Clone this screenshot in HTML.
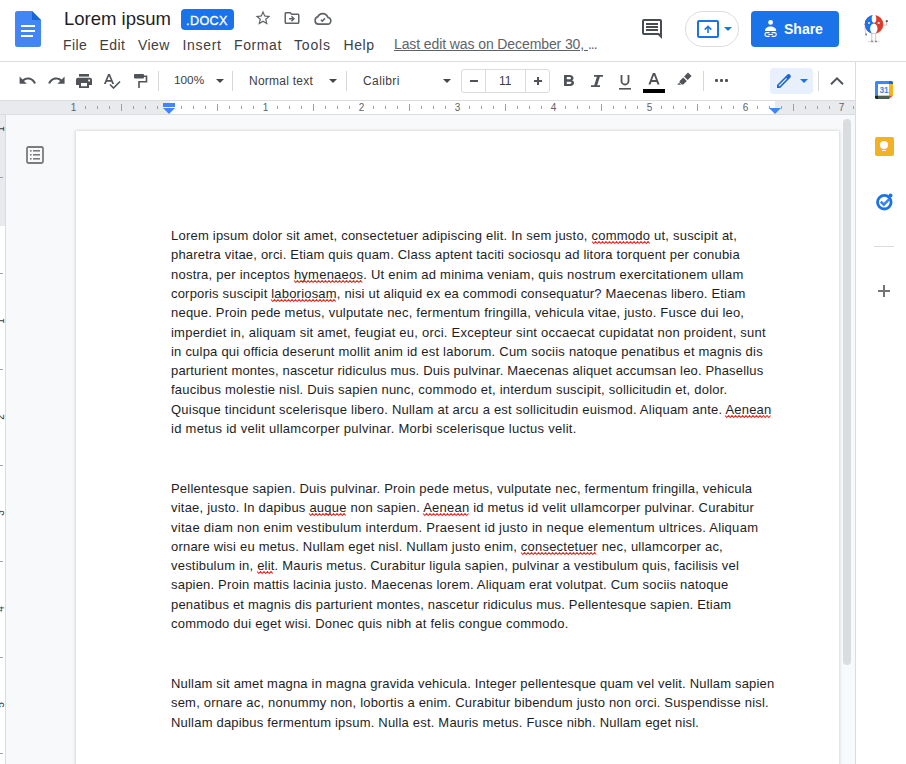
<!DOCTYPE html>
<html><head><meta charset="utf-8">
<style>
*{margin:0;padding:0;box-sizing:border-box}
html,body{width:906px;height:764px;overflow:hidden;background:#fff;font-family:"Liberation Sans",sans-serif;position:relative}
.a{position:absolute}
#hdr{left:0;top:0;width:906px;height:61px;background:#fff}
#hb{left:0;top:61px;width:906px;height:1px;background:#dadce0}
#tb{left:0;top:62px;width:855px;height:38px;background:#fff}
#ruler{left:0;top:100px;width:855px;height:15px;background:#e8eaed;border-top:1px solid #dadce0;border-bottom:1px solid #dadce0}
#canvas{left:6px;top:115px;width:849px;height:649px;background:#f8f9fa}
#vr{left:0;top:115px;width:6px;height:649px;background:#fff;border-right:1px solid #dadce0}
#page{left:76px;top:131px;width:763px;height:700px;background:#fff;box-shadow:0 0 2px 1px rgba(60,64,67,.10),0 1px 3px 1px rgba(60,64,67,.08)}
#side{left:855px;top:62px;width:51px;height:702px;background:#fff;border-left:1px solid #dadce0}
.menu{top:37px;font-size:14px;color:#3c4043;line-height:16px;letter-spacing:0.4px;white-space:nowrap}
.sep{top:71px;width:1px;height:20px;background:#d5d7da}
.tbt{top:75px;font-size:12px;color:#3c4043;line-height:12px;white-space:nowrap}
.tri{top:79px;width:8px;height:4px;fill:#474747}
.rn{top:2px;width:7px;text-align:center;font-size:10px;line-height:10px;color:#5f6368}
.sq{}
.txt{left:171px;font-family:"Liberation Sans",sans-serif;font-size:13px;color:#1e1e1e;white-space:nowrap;line-height:16px}
</style></head><body>
<div id="hdr" class="a"></div>
<div id="hb" class="a"></div>
<div id="tb" class="a"></div>
<div id="canvas" class="a"></div>
<div id="vr" class="a" style="overflow:hidden"><div class="a" style="left:0;top:0;width:5px;height:111px;background:#e8eaed"></div><div class="a" style="left:-4px;top:10.5px;width:10px;height:10px;font-size:10px;line-height:10px;text-align:center;color:#3c4043;transform:translateY(-2px) rotate(-90deg)">1</div><div class="a" style="left:0;top:62.0px;width:3px;height:1px;background:#9aa0a6"></div><div class="a" style="left:0;top:158.0px;width:3px;height:1px;background:#9aa0a6"></div><div class="a" style="left:-4px;top:202.5px;width:10px;height:10px;font-size:10px;line-height:10px;text-align:center;color:#3c4043;transform:translateY(-2px) rotate(-90deg)">1</div><div class="a" style="left:0;top:254.0px;width:3px;height:1px;background:#9aa0a6"></div><div class="a" style="left:-4px;top:298.5px;width:10px;height:10px;font-size:10px;line-height:10px;text-align:center;color:#3c4043;transform:translateY(-2px) rotate(-90deg)">2</div><div class="a" style="left:0;top:350.0px;width:3px;height:1px;background:#9aa0a6"></div><div class="a" style="left:-4px;top:394.5px;width:10px;height:10px;font-size:10px;line-height:10px;text-align:center;color:#3c4043;transform:translateY(-2px) rotate(-90deg)">3</div><div class="a" style="left:0;top:446.0px;width:3px;height:1px;background:#9aa0a6"></div><div class="a" style="left:-4px;top:490.5px;width:10px;height:10px;font-size:10px;line-height:10px;text-align:center;color:#3c4043;transform:translateY(-2px) rotate(-90deg)">4</div><div class="a" style="left:0;top:542.0px;width:3px;height:1px;background:#9aa0a6"></div><div class="a" style="left:-4px;top:586.5px;width:10px;height:10px;font-size:10px;line-height:10px;text-align:center;color:#3c4043;transform:translateY(-2px) rotate(-90deg)">5</div><div class="a" style="left:0;top:638.0px;width:3px;height:1px;background:#9aa0a6"></div><div class="a" style="left:-4px;top:682.5px;width:10px;height:10px;font-size:10px;line-height:10px;text-align:center;color:#3c4043;transform:translateY(-2px) rotate(-90deg)">6</div><div class="a" style="left:0;top:734.0px;width:3px;height:1px;background:#9aa0a6"></div></div>
<div id="ruler" class="a"><div class="a" style="left:170px;top:0;width:605px;height:13px;background:#fff"></div><div class="a rn" style="left:70.0px">1</div><div class="a" style="left:85.0px;top:5px;width:1px;height:3px;background:#9aa0a6"></div><div class="a" style="left:97.0px;top:5px;width:1px;height:3px;background:#9aa0a6"></div><div class="a" style="left:109.0px;top:5px;width:1px;height:3px;background:#9aa0a6"></div><div class="a" style="left:121.0px;top:3px;width:1px;height:7px;background:#9aa0a6"></div><div class="a" style="left:133.0px;top:5px;width:1px;height:3px;background:#9aa0a6"></div><div class="a" style="left:145.0px;top:5px;width:1px;height:3px;background:#9aa0a6"></div><div class="a" style="left:157.0px;top:5px;width:1px;height:3px;background:#9aa0a6"></div><div class="a" style="left:181.0px;top:5px;width:1px;height:3px;background:#9aa0a6"></div><div class="a" style="left:193.0px;top:5px;width:1px;height:3px;background:#9aa0a6"></div><div class="a" style="left:205.0px;top:5px;width:1px;height:3px;background:#9aa0a6"></div><div class="a" style="left:217.0px;top:3px;width:1px;height:7px;background:#9aa0a6"></div><div class="a" style="left:229.0px;top:5px;width:1px;height:3px;background:#9aa0a6"></div><div class="a" style="left:241.0px;top:5px;width:1px;height:3px;background:#9aa0a6"></div><div class="a" style="left:253.0px;top:5px;width:1px;height:3px;background:#9aa0a6"></div><div class="a rn" style="left:262.0px">1</div><div class="a" style="left:277.0px;top:5px;width:1px;height:3px;background:#9aa0a6"></div><div class="a" style="left:289.0px;top:5px;width:1px;height:3px;background:#9aa0a6"></div><div class="a" style="left:301.0px;top:5px;width:1px;height:3px;background:#9aa0a6"></div><div class="a" style="left:313.0px;top:3px;width:1px;height:7px;background:#9aa0a6"></div><div class="a" style="left:325.0px;top:5px;width:1px;height:3px;background:#9aa0a6"></div><div class="a" style="left:337.0px;top:5px;width:1px;height:3px;background:#9aa0a6"></div><div class="a" style="left:349.0px;top:5px;width:1px;height:3px;background:#9aa0a6"></div><div class="a rn" style="left:358.0px">2</div><div class="a" style="left:373.0px;top:5px;width:1px;height:3px;background:#9aa0a6"></div><div class="a" style="left:385.0px;top:5px;width:1px;height:3px;background:#9aa0a6"></div><div class="a" style="left:397.0px;top:5px;width:1px;height:3px;background:#9aa0a6"></div><div class="a" style="left:409.0px;top:3px;width:1px;height:7px;background:#9aa0a6"></div><div class="a" style="left:421.0px;top:5px;width:1px;height:3px;background:#9aa0a6"></div><div class="a" style="left:433.0px;top:5px;width:1px;height:3px;background:#9aa0a6"></div><div class="a" style="left:445.0px;top:5px;width:1px;height:3px;background:#9aa0a6"></div><div class="a rn" style="left:454.0px">3</div><div class="a" style="left:469.0px;top:5px;width:1px;height:3px;background:#9aa0a6"></div><div class="a" style="left:481.0px;top:5px;width:1px;height:3px;background:#9aa0a6"></div><div class="a" style="left:493.0px;top:5px;width:1px;height:3px;background:#9aa0a6"></div><div class="a" style="left:505.0px;top:3px;width:1px;height:7px;background:#9aa0a6"></div><div class="a" style="left:517.0px;top:5px;width:1px;height:3px;background:#9aa0a6"></div><div class="a" style="left:529.0px;top:5px;width:1px;height:3px;background:#9aa0a6"></div><div class="a" style="left:541.0px;top:5px;width:1px;height:3px;background:#9aa0a6"></div><div class="a rn" style="left:550.0px">4</div><div class="a" style="left:565.0px;top:5px;width:1px;height:3px;background:#9aa0a6"></div><div class="a" style="left:577.0px;top:5px;width:1px;height:3px;background:#9aa0a6"></div><div class="a" style="left:589.0px;top:5px;width:1px;height:3px;background:#9aa0a6"></div><div class="a" style="left:601.0px;top:3px;width:1px;height:7px;background:#9aa0a6"></div><div class="a" style="left:613.0px;top:5px;width:1px;height:3px;background:#9aa0a6"></div><div class="a" style="left:625.0px;top:5px;width:1px;height:3px;background:#9aa0a6"></div><div class="a" style="left:637.0px;top:5px;width:1px;height:3px;background:#9aa0a6"></div><div class="a rn" style="left:646.0px">5</div><div class="a" style="left:661.0px;top:5px;width:1px;height:3px;background:#9aa0a6"></div><div class="a" style="left:673.0px;top:5px;width:1px;height:3px;background:#9aa0a6"></div><div class="a" style="left:685.0px;top:5px;width:1px;height:3px;background:#9aa0a6"></div><div class="a" style="left:697.0px;top:3px;width:1px;height:7px;background:#9aa0a6"></div><div class="a" style="left:709.0px;top:5px;width:1px;height:3px;background:#9aa0a6"></div><div class="a" style="left:721.0px;top:5px;width:1px;height:3px;background:#9aa0a6"></div><div class="a" style="left:733.0px;top:5px;width:1px;height:3px;background:#9aa0a6"></div><div class="a rn" style="left:742.0px">6</div><div class="a" style="left:757.0px;top:5px;width:1px;height:3px;background:#9aa0a6"></div><div class="a" style="left:769.0px;top:5px;width:1px;height:3px;background:#9aa0a6"></div><div class="a" style="left:781.0px;top:5px;width:1px;height:3px;background:#9aa0a6"></div><div class="a" style="left:793.0px;top:3px;width:1px;height:7px;background:#9aa0a6"></div><div class="a" style="left:805.0px;top:5px;width:1px;height:3px;background:#9aa0a6"></div><div class="a" style="left:817.0px;top:5px;width:1px;height:3px;background:#9aa0a6"></div><div class="a" style="left:829.0px;top:5px;width:1px;height:3px;background:#9aa0a6"></div><div class="a rn" style="left:838.0px">7</div><div class="a" style="left:163px;top:2px;width:12px;height:4px;background:#4285f4"></div><svg class="a" style="left:163px;top:7px" width="12" height="6" viewBox="0 0 12 6"><path d="M0 0H12L6 6Z" fill="#4285f4"/></svg><div class="a" style="left:853px;top:5px;width:1px;height:3px;background:#9aa0a6"></div><svg class="a" style="left:769px;top:7px" width="12" height="6" viewBox="0 0 12 6"><path d="M0 0H12L6 6Z" fill="#4285f4"/></svg></div>
<div id="page" class="a"></div>
<div id="side" class="a"></div>
<div class="a" style="left:843px;top:119px;width:8px;height:546px;background:#dadce0;border-radius:4px"></div>

<!-- doc icon -->
<svg class="a" style="left:15px;top:11px" width="26" height="36" viewBox="0 0 26 36">
<path d="M2.5 0H17L26 9V33.5A2.5 2.5 0 0 1 23.5 36H2.5A2.5 2.5 0 0 1 0 33.5V2.5A2.5 2.5 0 0 1 2.5 0Z" fill="#4285f4"/>
<path d="M17 0L26 9H17Z" fill="#1967d2"/>
<rect x="6" y="14" width="14" height="2" fill="#fff"/>
<rect x="6" y="19" width="14" height="2" fill="#fff"/>
<rect x="6" y="24" width="12" height="2" fill="#fff"/>
</svg>
<div class="a" style="left:64px;top:8px;font-size:18.5px;color:#1f1f1f;line-height:22px">Lorem ipsum</div>
<div class="a" style="left:181px;top:9px;width:53px;height:21px;background:#1a73e8;border-radius:4px"></div><div class="a" style="left:186px;top:14px;color:#fff;font-size:12.6px;line-height:14px;letter-spacing:0.4px;-webkit-text-stroke:0.3px #fff;white-space:nowrap">.DOCX</div>
<!-- star -->
<svg class="a" style="left:254px;top:9px" width="18" height="18" viewBox="0 0 24 24"><path fill="#5f6368" d="M22 9.24l-7.19-.62L12 2 9.19 8.63 2 9.24l5.46 4.73L5.82 21 12 17.27 18.18 21l-1.63-7.03L22 9.24zM12 15.4l-3.76 2.27 1-4.28-3.32-2.88 4.38-.38L12 6.1l1.71 4.04 4.38.38-3.32 2.88 1 4.28L12 15.4z"/></svg>
<!-- move folder -->
<svg class="a" style="left:283px;top:9px" width="18" height="18" viewBox="0 0 24 24"><path fill="#5f6368" d="M20 6h-8l-2-2H4c-1.1 0-1.99.9-1.99 2L2 18c0 1.1.9 2 2 2h16c1.1 0 2-.9 2-2V8c0-1.1-.9-2-2-2zm0 12H4V6h5.17l2 2H20v10zm-7.84-6H8v2h4.16l-1.59 1.59L11.99 17 16 13.01 11.99 9l-1.41 1.41L12.16 12z"/></svg>
<!-- cloud -->
<svg class="a" style="left:314px;top:11px" width="18" height="14" viewBox="0 -0.5 18 13" preserveAspectRatio="none"><path fill="none" stroke="#5f6368" stroke-width="1.6" d="M4.3 11.7H13.6A3.1 3.1 0 0 0 13.9 5.5A5.6 5.6 0 0 0 3.7 5A3.4 3.4 0 0 0 4.3 11.7Z"/><path fill="none" stroke="#5f6368" stroke-width="1.5" d="M6.9 7.6L8.3 8.9L11 6.3"/></svg>

<div class="a menu" style="left:63px">File</div>
<div class="a menu" style="left:99.5px">Edit</div>
<div class="a menu" style="left:138px">View</div>
<div class="a menu" style="left:182.5px;letter-spacing:0.7px">Insert</div>
<div class="a menu" style="left:234px;letter-spacing:0.6px">Format</div>
<div class="a menu" style="left:294px;letter-spacing:0.8px">Tools</div>
<div class="a menu" style="left:343.5px;letter-spacing:0.6px">Help</div>
<div class="a menu" style="left:394px;top:36px;color:#5f6368;letter-spacing:-0.1px"><span style="text-decoration:underline">Last edit was on December 30, </span><span style="letter-spacing:-1px">...</span></div>

<!-- comment icon -->
<svg class="a" style="left:642px;top:19px" width="20" height="20" viewBox="0 0 20 20"><path fill="#484b4f" d="M2 0H18A2 2 0 0 1 20 2V20L16 16H2A2 2 0 0 1 0 14V2A2 2 0 0 1 2 0ZM2 2V14H17L18 15V2Z"/><rect x="4" y="4" width="12" height="2" fill="#484b4f"/><rect x="4" y="7" width="12" height="2" fill="#484b4f"/><rect x="4" y="10" width="12" height="2" fill="#484b4f"/></svg>
<!-- present pill -->
<div class="a" style="left:685px;top:11px;width:54px;height:36px;border:1px solid #dadce0;border-radius:18px"></div>
<div class="a" style="left:697px;top:20px;width:22px;height:18px;border:2px solid #1a73e8;border-radius:2px"></div>
<svg class="a" style="left:703px;top:25px" width="10" height="9" viewBox="0 0 10 9"><path fill="#1a73e8" d="M5 0.3L8.8 4.1L7.7 5.2L5.8 3.3V8H4.2V3.3L2.3 5.2L1.2 4.1Z"/></svg>
<svg class="a" style="left:724px;top:27px" width="8" height="4" viewBox="0 0 8 4"><path fill="#1a73e8" d="M0 0H8L4 4Z"/></svg>

<div class="a" style="left:751px;top:11px;width:88px;height:36px;background:#1a73e8;border-radius:4px"></div>
<svg class="a" style="left:763px;top:19px" width="16" height="20" viewBox="0 0 16 20"><circle cx="7.6" cy="3.4" r="2.4" fill="#fff"/><path fill="#fff" d="M2 11.7C2 9 4.5 7.4 7.6 7.4S13.2 9 13.2 11.7V12H2Z"/><path fill="none" stroke="#fff" stroke-width="1.1" d="M6.6 13.6H3.8A1.9 1.9 0 0 0 3.8 17.4H6.6M8.6 13.6H11.4A1.9 1.9 0 0 1 11.4 17.4H8.6M5.4 15.5H9.8"/></svg>
<div class="a" style="left:784px;top:21px;font-size:14px;font-weight:bold;color:#fff;line-height:16px">Share</div>

<!-- avatar -->
<svg class="a" style="left:860px;top:12px" width="34" height="32" viewBox="0 0 34 32">
<ellipse cx="13.5" cy="29.6" rx="6.5" ry="1.1" fill="#e6e6e6"/>
<path d="M11.8 21.5V29M15.7 21.5V29" stroke="#d9b8b8" stroke-width="0.9"/>
<path d="M11 29.3H13M15 29.3H17" stroke="#777" stroke-width="1"/>
<circle cx="14" cy="12.4" r="9.3" fill="#db3b2b"/>
<path d="M14 3.1A9.3 9.3 0 0 0 14 21.7Z" fill="#1a73e8"/>
<ellipse cx="14" cy="6.7" rx="2.3" ry="4" fill="#fff"/>
<ellipse cx="13.8" cy="16.6" rx="3.7" ry="5.2" fill="#fff"/>
<rect x="8" y="10" width="2" height="2" fill="#e8c4a0"/><rect x="17.7" y="10" width="2" height="2" fill="#bfe0e8"/>
<path d="M23.3 13.2H26.7V9.5" stroke="#dca0a0" stroke-width="0.8" fill="none"/><circle cx="26.8" cy="9.2" r="1.1" fill="#555"/>
<path d="M4.8 14.5L5.6 21.5" stroke="#e0b8b8" stroke-width="0.8"/><rect x="5.2" y="21.3" width="1.8" height="2.2" fill="#8a8a8a"/>
</svg>
<!-- toolbar -->
<svg class="a" style="left:18.4px;top:71.4px" width="19.2" height="19.2" viewBox="0 0 24 24"><path fill="#505458" d="M12.5 8c-2.65 0-5.05.99-6.9 2.6L2 7v9h9l-3.62-3.62c1.39-1.16 3.16-1.88 5.12-1.88 3.54 0 6.55 2.31 7.6 5.5l2.37-.78C21.08 11.03 17.15 8 12.5 8z"/></svg>
<svg class="a" style="left:46.5px;top:71.4px" width="19.2" height="19.2" viewBox="0 0 24 24"><path fill="#505458" d="M18.4 10.6C16.55 8.99 14.15 8 11.5 8c-4.65 0-8.58 3.03-9.96 7.22L3.9 16c1.05-3.19 4.05-5.5 7.6-5.5 1.95 0 3.73.72 5.12 1.88L13 16h9V7l-3.6 3.6z"/></svg>
<svg class="a" style="left:76px;top:74px" width="16" height="14" viewBox="0 0 16 14"><rect x="3" y="0" width="10" height="2.6" fill="#505458"/><path fill="#505458" fill-rule="evenodd" d="M2 3.7H14A2 2 0 0 1 16 5.7V11H13V14H3V11H0V5.7A2 2 0 0 1 2 3.7ZM5 9V12.2H11V9Z"/><rect x="12.2" y="5.6" width="1.8" height="1.8" fill="#fff"/></svg>
<svg class="a" style="left:104px;top:74px" width="17" height="15" viewBox="0 0 17 15"><path fill="#505458" d="M4.1 0H5.9L10.1 10.1H8.2L7.3 7.7H2.7L1.8 10.1H-0.1ZM3.3 6.1H6.7L5 1.9Z"/><path fill="none" stroke="#505458" stroke-width="1.6" d="M6 10.5L9.5 14L16 7.5"/></svg>
<svg class="a" style="left:134px;top:74px" width="14" height="14" viewBox="0 0 14 14"><rect x="0" y="0" width="10" height="4.5" rx="1" fill="#505458"/><path fill="none" stroke="#505458" stroke-width="1.6" d="M10 2.2H12.5V7.8H5V14"/></svg>
<div class="a sep" style="left:158px"></div>
<div class="a tbt" style="left:174px;top:74px;font-size:11.8px">100%</div>
<svg class="a tri" style="left:216px"><path d="M0 0H8L4 4Z"/></svg>
<div class="a sep" style="left:232px"></div>
<div class="a tbt" style="left:249px;letter-spacing:0.25px">Normal text</div>
<svg class="a tri" style="left:329px"><path d="M0 0H8L4 4Z"/></svg>
<div class="a sep" style="left:346px"></div>
<div class="a tbt" style="left:363px;letter-spacing:0.4px">Calibri</div>
<svg class="a tri" style="left:443px"><path d="M0 0H8L4 4Z"/></svg>
<div class="a" style="left:461px;top:69px;width:89px;height:24px;border:1px solid #dadce0;border-radius:3px"></div>
<div class="a" style="left:485px;top:70px;width:1px;height:22px;background:#dadce0"></div>
<div class="a" style="left:525px;top:70px;width:1px;height:22px;background:#dadce0"></div>
<div class="a" style="left:470px;top:80px;width:8px;height:2px;background:#505458"></div>
<div class="a tbt" style="left:499px;top:75px">11</div>
<div class="a" style="left:534px;top:80px;width:8px;height:2px;background:#505458"></div>
<div class="a" style="left:537px;top:77px;width:2px;height:8px;background:#505458"></div>
<svg class="a" style="left:563.5px;top:75.3px" width="10" height="11" viewBox="7 4 10.75 14" preserveAspectRatio="none"><path fill="#505458" d="M15.6 10.79c.97-.67 1.65-1.77 1.65-2.79 0-2.26-1.75-4-4-4H7v14h7.04c2.09 0 3.71-1.7 3.71-3.79 0-1.52-.86-2.82-2.15-3.42zM10 6.5h3c.83 0 1.5.67 1.5 1.5s-.67 1.5-1.5 1.5h-3v-3zm3.5 9H10v-3h3.5c.83 0 1.5.67 1.5 1.5s-.67 1.5-1.5 1.5z"/></svg>
<svg class="a" style="left:591px;top:75px" width="12" height="12" viewBox="0 0 12 12"><path fill="#505458" d="M3 0H12V1.8H8.9L6.2 10.2H9V12H0V10.2H3.2L5.9 1.8H3Z"/></svg>
<svg class="a" style="left:619px;top:75px" width="12" height="15" viewBox="0 0 12 15"><path fill="none" stroke="#505458" stroke-width="1.8" d="M2.5 0V6A3.5 3.5 0 0 0 9.5 6V0"/><rect x="0" y="13" width="12" height="1.6" fill="#505458"/></svg>
<svg class="a" style="left:648px;top:73px" width="12" height="12" viewBox="0 0 12 12"><path fill="#505458" d="M4.85 0H7.15L11.6 11.6H9.5L8.5 8.9H3.5L2.5 11.6H0.4ZM4.1 7.1H7.9L6 2.3Z"/></svg>
<div class="a" style="left:643px;top:89px;width:22px;height:4px;background:#000"></div>
<svg class="a" style="left:677px;top:72px" width="15" height="13" viewBox="0 0 15 13"><path fill="#505458" d="M11 0.5L14.6 4.1L10.7 8L7.1 4.4Z"/><path fill="#505458" d="M6.3 5.4L9.8 8.9L6.3 12.4H4.7L2.6 10.3V9.1Z"/><path fill="#505458" d="M2.2 10.8L4.2 12.8H0.2Z"/></svg>
<div class="a sep" style="left:703px"></div>
<div class="a" style="left:715px;top:79px;width:3px;height:3px;background:#505458;border-radius:1px"></div>
<div class="a" style="left:720px;top:79px;width:3px;height:3px;background:#505458;border-radius:1px"></div>
<div class="a" style="left:725px;top:79px;width:3px;height:3px;background:#505458;border-radius:1px"></div>
<div class="a" style="left:770px;top:68px;width:43px;height:26px;background:#e8f0fe;border-radius:4px"></div>
<svg class="a" style="left:776px;top:73px" width="16" height="16" viewBox="0 0 16 16"><path fill="#1b66d6" d="M1 11.9L11.2 1.7A2.2 2.2 0 0 1 14.3 4.8L4.1 15H1Z"/><path stroke="#e8f0fe" stroke-width="1.2" d="M3 13L10.6 5.4"/></svg>
<svg class="a" style="left:800px;top:79px" width="8" height="4" viewBox="0 0 8 4"><path fill="#1a73e8" d="M0 0H8L4 4Z"/></svg>
<div class="a sep" style="left:818px"></div>
<svg class="a" style="left:830px;top:77px" width="14" height="8" viewBox="0 0 14 8"><path fill="none" stroke="#505458" stroke-width="2" d="M1 7.3L7 1.4L13 7.3"/></svg>

<!-- side panel icons -->
<svg class="a" style="left:875px;top:81px" width="18" height="18" viewBox="0 0 18 18">
<path d="M0 1.5A1.5 1.5 0 0 1 1.5 0H14V3.2H3V14.5H0Z" fill="#4285f4"/>
<path d="M14 0H16.5A1.5 1.5 0 0 1 18 1.5V3.2H14Z" fill="#1967d2"/>
<rect x="14" y="3.2" width="4" height="11.3" fill="#f4b41a"/>
<path d="M3 14.5H14V18H3Z" fill="#34a853" opacity="0.85"/>
<path d="M3 14.5H14V18H3Z" fill="#4b5f52"/>
<path d="M0 14.5H3V18H1.5A1.5 1.5 0 0 1 0 16.5Z" fill="#202124"/>
<path d="M14 14.5H18L14 18Z" fill="#ea4335"/>
<rect x="3" y="3.2" width="11" height="11.3" fill="#fff"/>
<text x="8.9" y="12.1" text-anchor="middle" style="font-family:'Liberation Sans';font-size:8.3px;font-weight:bold;letter-spacing:-0.3px" fill="#4285f4">31</text>
</svg>
<div class="a" style="left:875px;top:137px;width:19px;height:19px;background:#f1b324;border-radius:2px"></div>
<div class="a" style="left:880px;top:141px;width:8px;height:8px;background:#fff;border-radius:50%"></div>
<div class="a" style="left:882px;top:150px;width:4px;height:1px;background:#fff"></div>
<svg class="a" style="left:875px;top:192px" width="19" height="19" viewBox="0 0 19 19"><circle cx="9.3" cy="10.2" r="6.8" fill="none" stroke="#1a73e8" stroke-width="2.8"/><path d="M5.8 9.6L8.8 12.6L14.5 6.8" fill="none" stroke="#3b82f0" stroke-width="2.6"/><circle cx="15.5" cy="3.5" r="2" fill="#1a73e8"/></svg>
<div class="a" style="left:874px;top:246px;width:20px;height:1px;background:#dadce0"></div>
<div class="a" style="left:878px;top:290px;width:12px;height:2px;background:#757575"></div>
<div class="a" style="left:883px;top:285px;width:2px;height:12px;background:#757575"></div>

<!-- outline icon -->
<svg class="a" style="left:26px;top:146px" width="18" height="18" viewBox="0 0 18 18"><rect x="1" y="1" width="16" height="16" rx="1.5" fill="none" stroke="#7c7c7c" stroke-width="1.8"/><rect x="4" y="4" width="1.6" height="1.6" fill="#7c7c7c"/><rect x="4" y="8" width="1.6" height="1.6" fill="#7c7c7c"/><rect x="4" y="12" width="1.6" height="1.6" fill="#7c7c7c"/><rect x="7" y="4" width="7" height="1.6" fill="#7c7c7c"/><rect x="7" y="8" width="7" height="1.6" fill="#7c7c7c"/><rect x="7" y="12" width="7" height="1.6" fill="#7c7c7c"/></svg>

<!-- body text -->
<!--TEXT-->
<div class="a txt" style="top:227.50px;letter-spacing:0.221px">Lorem ipsum dolor sit amet, consectetuer adipiscing elit. In sem justo, <span class="sq">commodo</span> ut, suscipit at,</div>
<div class="a txt" style="top:246.50px;letter-spacing:0.201px">pharetra vitae, orci. Etiam quis quam. Class aptent taciti sociosqu ad litora torquent per conubia</div>
<div class="a txt" style="top:266.50px;letter-spacing:0.242px">nostra, per inceptos <span class="sq">hymenaeos</span>. Ut enim ad minima veniam, quis nostrum exercitationem ullam</div>
<div class="a txt" style="top:285.50px;letter-spacing:0.192px">corporis suscipit <span class="sq">laboriosam</span>, nisi ut aliquid ex ea commodi consequatur? Maecenas libero. Etiam</div>
<div class="a txt" style="top:304.50px;letter-spacing:0.208px">neque. Proin pede metus, vulputate nec, fermentum fringilla, vehicula vitae, justo. Fusce dui leo,</div>
<div class="a txt" style="top:324.50px;letter-spacing:0.235px">imperdiet in, aliquam sit amet, feugiat eu, orci. Excepteur sint occaecat cupidatat non proident, sunt</div>
<div class="a txt" style="top:343.50px;letter-spacing:0.220px">in culpa qui officia deserunt mollit anim id est laborum. Cum sociis natoque penatibus et magnis dis</div>
<div class="a txt" style="top:362.50px;letter-spacing:0.168px">parturient montes, nascetur ridiculus mus. Duis pulvinar. Maecenas aliquet accumsan leo. Phasellus</div>
<div class="a txt" style="top:381.50px;letter-spacing:0.226px">faucibus molestie nisl. Duis sapien nunc, commodo et, interdum suscipit, sollicitudin et, dolor.</div>
<div class="a txt" style="top:401.50px;letter-spacing:0.222px">Quisque tincidunt scelerisque libero. Nullam at arcu a est sollicitudin euismod. Aliquam ante. <span class="sq">Aenean</span></div>
<div class="a txt" style="top:420.50px;letter-spacing:0.268px">id metus id velit ullamcorper pulvinar. Morbi scelerisque luctus velit.</div>
<div class="a txt" style="top:480.50px;letter-spacing:0.201px">Pellentesque sapien. Duis pulvinar. Proin pede metus, vulputate nec, fermentum fringilla, vehicula</div>
<div class="a txt" style="top:499.50px;letter-spacing:0.217px">vitae, justo. In dapibus <span class="sq">augue</span> non sapien. <span class="sq">Aenean</span> id metus id velit ullamcorper pulvinar. Curabitur</div>
<div class="a txt" style="top:519.50px;letter-spacing:0.287px">vitae diam non enim vestibulum interdum. Praesent id justo in neque elementum ultrices. Aliquam</div>
<div class="a txt" style="top:538.50px;letter-spacing:0.211px">ornare wisi eu metus. Nullam eget nisl. Nullam justo enim, <span class="sq">consectetuer</span> nec, ullamcorper ac,</div>
<div class="a txt" style="top:557.50px;letter-spacing:0.202px">vestibulum in, <span class="sq">elit</span>. Mauris metus. Curabitur ligula sapien, pulvinar a vestibulum quis, facilisis vel</div>
<div class="a txt" style="top:576.50px;letter-spacing:0.198px">sapien. Proin mattis lacinia justo. Maecenas lorem. Aliquam erat volutpat. Cum sociis natoque</div>
<div class="a txt" style="top:596.50px;letter-spacing:0.190px">penatibus et magnis dis parturient montes, nascetur ridiculus mus. Pellentesque sapien. Etiam</div>
<div class="a txt" style="top:615.50px;letter-spacing:0.207px">commodo dui eget wisi. Donec quis nibh at felis congue commodo.</div>
<div class="a txt" style="top:675.50px;letter-spacing:0.183px">Nullam sit amet magna in magna gravida vehicula. Integer pellentesque quam vel velit. Nullam sapien</div>
<div class="a txt" style="top:694.50px;letter-spacing:0.194px">sem, ornare ac, nonummy non, lobortis a enim. Curabitur bibendum justo non orci. Suspendisse nisl.</div>
<div class="a txt" style="top:714.50px;letter-spacing:0.202px">Nullam dapibus fermentum ipsum. Nulla est. Mauris metus. Fusce nibh. Nullam eget nisl.</div>
<!--/TEXT-->



<!--SQ--><svg class="a" style="left:591.5px;top:240.8px;overflow:visible" width="58.6" height="3"><polyline points="0.0,0.5 1.8,2.5 3.5,0.5 5.2,2.5 7.0,0.5 8.8,2.5 10.5,0.5 12.2,2.5 14.0,0.5 15.8,2.5 17.5,0.5 19.2,2.5 21.0,0.5 22.8,2.5 24.5,0.5 26.2,2.5 28.0,0.5 29.8,2.5 31.5,0.5 33.2,2.5 35.0,0.5 36.8,2.5 38.5,0.5 40.2,2.5 42.0,0.5 43.8,2.5 45.5,0.5 47.2,2.5 49.0,0.5 50.8,2.5 52.5,0.5 54.2,2.5 56.0,0.5 57.8,2.5" fill="none" stroke="#d93025" stroke-width="1.1"/></svg><svg class="a" style="left:293.9px;top:279.8px;overflow:visible" width="69.4" height="3"><polyline points="0.0,0.5 1.8,2.5 3.5,0.5 5.2,2.5 7.0,0.5 8.8,2.5 10.5,0.5 12.2,2.5 14.0,0.5 15.8,2.5 17.5,0.5 19.2,2.5 21.0,0.5 22.8,2.5 24.5,0.5 26.2,2.5 28.0,0.5 29.8,2.5 31.5,0.5 33.2,2.5 35.0,0.5 36.8,2.5 38.5,0.5 40.2,2.5 42.0,0.5 43.8,2.5 45.5,0.5 47.2,2.5 49.0,0.5 50.8,2.5 52.5,0.5 54.2,2.5 56.0,0.5 57.8,2.5 59.5,0.5 61.2,2.5 63.0,0.5 64.8,2.5 66.5,0.5 68.2,2.5" fill="none" stroke="#d93025" stroke-width="1.1"/></svg><svg class="a" style="left:271.3px;top:298.8px;overflow:visible" width="65.5" height="3"><polyline points="0.0,0.5 1.8,2.5 3.5,0.5 5.2,2.5 7.0,0.5 8.8,2.5 10.5,0.5 12.2,2.5 14.0,0.5 15.8,2.5 17.5,0.5 19.2,2.5 21.0,0.5 22.8,2.5 24.5,0.5 26.2,2.5 28.0,0.5 29.8,2.5 31.5,0.5 33.2,2.5 35.0,0.5 36.8,2.5 38.5,0.5 40.2,2.5 42.0,0.5 43.8,2.5 45.5,0.5 47.2,2.5 49.0,0.5 50.8,2.5 52.5,0.5 54.2,2.5 56.0,0.5 57.8,2.5 59.5,0.5 61.2,2.5 63.0,0.5 64.8,2.5" fill="none" stroke="#d93025" stroke-width="1.1"/></svg><svg class="a" style="left:725.4px;top:414.8px;overflow:visible" width="46.2" height="3"><polyline points="0.0,0.5 1.8,2.5 3.5,0.5 5.2,2.5 7.0,0.5 8.8,2.5 10.5,0.5 12.2,2.5 14.0,0.5 15.8,2.5 17.5,0.5 19.2,2.5 21.0,0.5 22.8,2.5 24.5,0.5 26.2,2.5 28.0,0.5 29.8,2.5 31.5,0.5 33.2,2.5 35.0,0.5 36.8,2.5 38.5,0.5 40.2,2.5 42.0,0.5 43.8,2.5 45.5,0.5" fill="none" stroke="#d93025" stroke-width="1.1"/></svg><svg class="a" style="left:309.4px;top:512.8px;overflow:visible" width="37.2" height="3"><polyline points="0.0,0.5 1.8,2.5 3.5,0.5 5.2,2.5 7.0,0.5 8.8,2.5 10.5,0.5 12.2,2.5 14.0,0.5 15.8,2.5 17.5,0.5 19.2,2.5 21.0,0.5 22.8,2.5 24.5,0.5 26.2,2.5 28.0,0.5 29.8,2.5 31.5,0.5 33.2,2.5 35.0,0.5 36.8,2.5" fill="none" stroke="#d93025" stroke-width="1.1"/></svg><svg class="a" style="left:423.2px;top:512.8px;overflow:visible" width="46.1" height="3"><polyline points="0.0,0.5 1.8,2.5 3.5,0.5 5.2,2.5 7.0,0.5 8.8,2.5 10.5,0.5 12.2,2.5 14.0,0.5 15.8,2.5 17.5,0.5 19.2,2.5 21.0,0.5 22.8,2.5 24.5,0.5 26.2,2.5 28.0,0.5 29.8,2.5 31.5,0.5 33.2,2.5 35.0,0.5 36.8,2.5 38.5,0.5 40.2,2.5 42.0,0.5 43.8,2.5 45.5,0.5" fill="none" stroke="#d93025" stroke-width="1.1"/></svg><svg class="a" style="left:520.9px;top:551.8px;overflow:visible" width="77.0" height="3"><polyline points="0.0,0.5 1.8,2.5 3.5,0.5 5.2,2.5 7.0,0.5 8.8,2.5 10.5,0.5 12.2,2.5 14.0,0.5 15.8,2.5 17.5,0.5 19.2,2.5 21.0,0.5 22.8,2.5 24.5,0.5 26.2,2.5 28.0,0.5 29.8,2.5 31.5,0.5 33.2,2.5 35.0,0.5 36.8,2.5 38.5,0.5 40.2,2.5 42.0,0.5 43.8,2.5 45.5,0.5 47.2,2.5 49.0,0.5 50.8,2.5 52.5,0.5 54.2,2.5 56.0,0.5 57.8,2.5 59.5,0.5 61.2,2.5 63.0,0.5 64.8,2.5 66.5,0.5 68.2,2.5 70.0,0.5 71.8,2.5 73.5,0.5 75.2,2.5" fill="none" stroke="#d93025" stroke-width="1.1"/></svg><svg class="a" style="left:257.1px;top:570.8px;overflow:visible" width="17.4" height="3"><polyline points="0.0,0.5 1.8,2.5 3.5,0.5 5.2,2.5 7.0,0.5 8.8,2.5 10.5,0.5 12.2,2.5 14.0,0.5 15.8,2.5" fill="none" stroke="#d93025" stroke-width="1.1"/></svg><!--/SQ-->
</body></html>
